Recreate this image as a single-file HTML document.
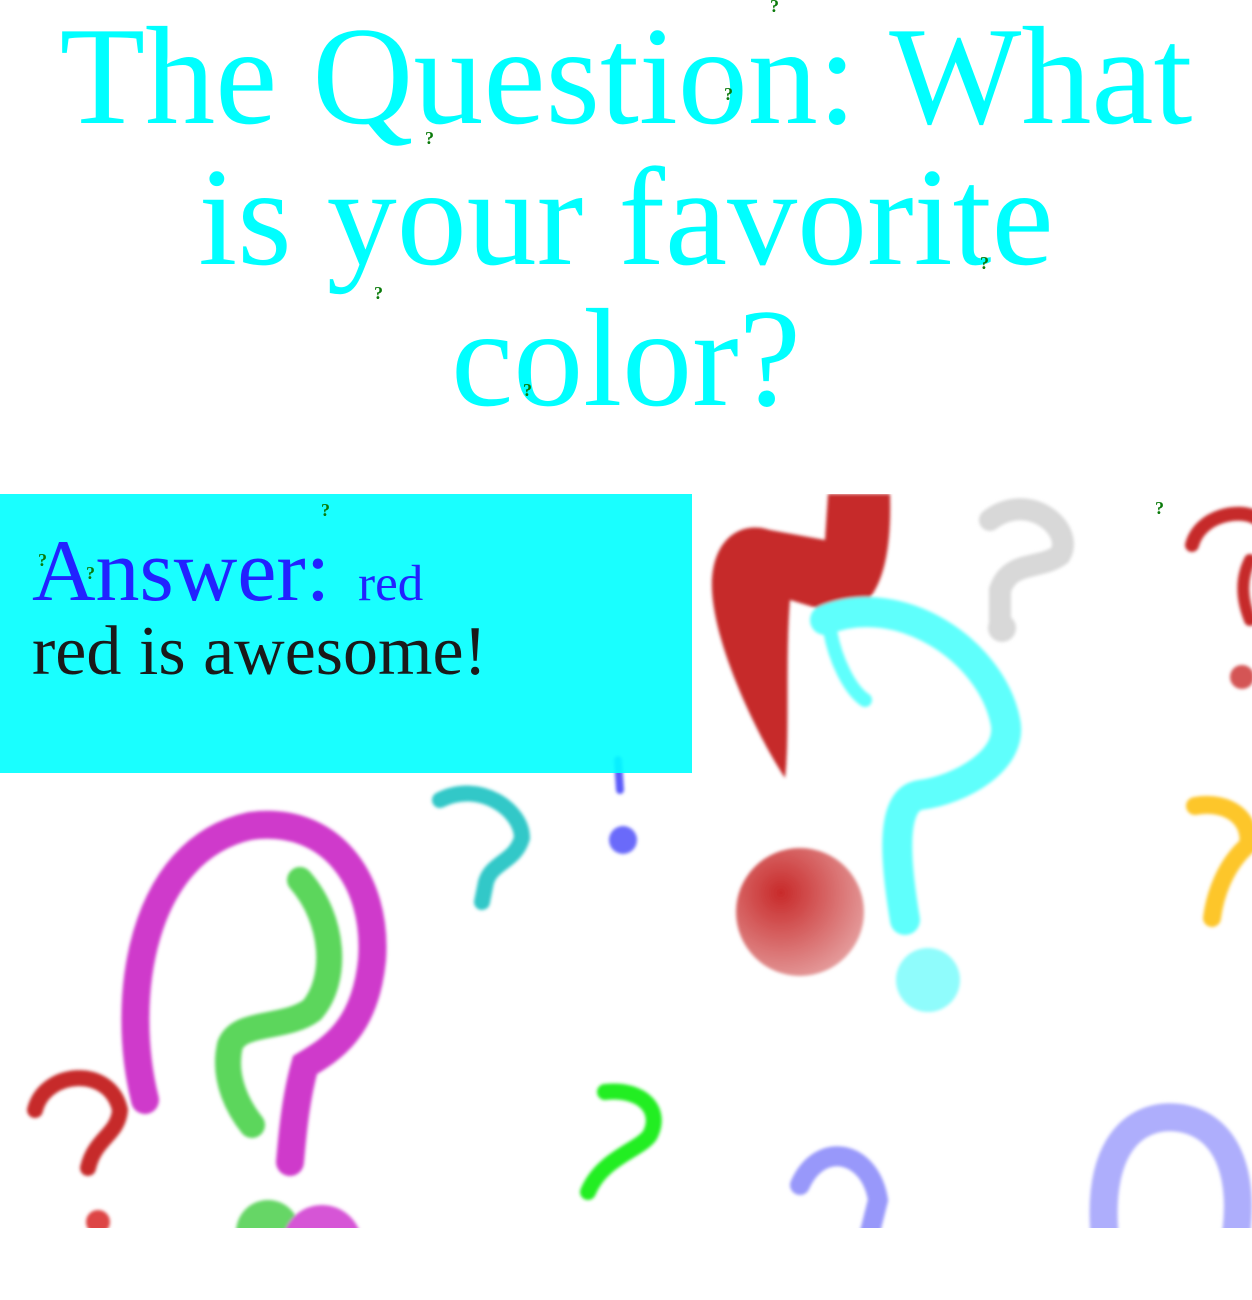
<!DOCTYPE html>
<html><head><meta charset="utf-8"><style>
html,body{margin:0;padding:0;background:#fff;width:1252px;height:1300px;overflow:hidden;position:relative}
h1{position:absolute;left:0;top:6px;width:1252px;margin:0;text-align:center;font:140px/141px "Liberation Serif",serif;color:#00ffff;font-weight:normal;white-space:nowrap}
svg{position:absolute;left:0;top:0}
.box{position:absolute;left:0;top:494px;width:692px;height:279px;background:rgba(0,255,255,0.9)}
.a1{position:absolute;left:32px;top:528px;font:88px/1 "Liberation Serif",serif;color:#2222ff;white-space:nowrap}
.a1 span{font-size:51px;margin-left:6px}
.a2{position:absolute;left:32px;top:617px;font:70px/1 "Liberation Serif",serif;color:#1a1a1a;white-space:nowrap}
.q{position:absolute;font:bold 18px "Liberation Serif",serif;color:#0a7a0a}
</style></head><body>
<svg width="1252" height="1300" viewBox="0 0 1252 1300">
<defs>
<clipPath id="c"><rect x="0" y="494" width="1252" height="734"/></clipPath>
<filter id="b"><feGaussianBlur stdDeviation="1.5"/></filter>
<radialGradient id="rg" cx="0.35" cy="0.35" r="0.7"><stop offset="0" stop-color="#c82a2a"/><stop offset="1" stop-color="#e49a9a"/></radialGradient>
</defs>
<g clip-path="url(#c)" filter="url(#b)" fill="none" stroke-linecap="round">
<path d="M785,778 C760,740 715,650 712,590 C710,540 740,520 770,530 L825,540 L828,494 L890,494 C892,560 880,610 840,615 L790,600 C785,660 790,740 785,778 Z" fill="#c62c2c" stroke="none"/>
<path d="M825,620 C900,590 990,650 1005,720 C1015,760 960,790 920,795 C890,800 895,860 905,920" stroke="#5ffffc" stroke-width="30"/>
<path d="M830,630 C835,660 850,690 865,700" stroke="#5ffffc" stroke-width="14"/>
<circle cx="928" cy="980" r="32" fill="#8ffcfc"/>
<circle cx="800" cy="912" r="64" fill="url(#rg)"/>
<path d="M990,520 C1030,490 1075,530 1060,555 C1040,570 1010,560 1000,590 L1000,620" stroke="#d8d8d8" stroke-width="22"/>
<circle cx="1002" cy="628" r="14" fill="#d8d8d8"/>
<path d="M1192,545 C1200,515 1240,508 1256,518" stroke="#c62c2c" stroke-width="14"/>
<path d="M1250,560 C1240,580 1242,600 1250,620" stroke="#c62c2c" stroke-width="12"/>
<circle cx="1242" cy="677" r="12" fill="#d45555"/>
<path d="M1195,806 C1230,800 1252,820 1248,845 C1225,865 1215,895 1212,918" stroke="#fdc62c" stroke-width="18"/>
<path d="M800,1185 C820,1140 870,1150 878,1200 L868,1240" stroke="#9898fa" stroke-width="20"/>
<path d="M1105,1240 C1095,1140 1140,1112 1180,1118 C1230,1126 1245,1180 1235,1240" stroke="#aeaefc" stroke-width="28"/>
<path d="M300,880 C335,920 338,980 312,1010 C285,1030 240,1020 230,1045 C222,1080 240,1110 252,1125" stroke="#5cd65c" stroke-width="26"/>
<path d="M145,1100 C120,1000 140,850 250,826 C330,815 378,880 372,960 C365,1030 330,1050 305,1065 C295,1100 292,1140 290,1162" stroke="#cc30c8" stroke-width="28" opacity="0.95"/>
<path d="M440,800 C480,780 522,810 522,838 C515,862 492,862 486,882 L482,902" stroke="#33c8c8" stroke-width="16"/>
<path d="M618,760 L620,790" stroke="#5a5afa" stroke-width="8"/>
<circle cx="623" cy="840" r="14" fill="#6a6afa"/>
<path d="M35,1110 C45,1070 110,1065 120,1110 C118,1135 95,1138 88,1168" stroke="#c62c2c" stroke-width="16"/>
<circle cx="98" cy="1222" r="12" fill="#d44"/>
<path d="M605,1092 C645,1088 662,1112 650,1135 C640,1150 602,1158 588,1192" stroke="#22ee22" stroke-width="16"/>
<circle cx="268" cy="1232" r="32" fill="#66d666"/>
<circle cx="322" cy="1245" r="40" fill="#d655d6"/>
</g>
</svg>
<h1>The Question: What<br>is your favorite<br>color?</h1>
<div class="box"></div>
<div class="a1">Answer: <span>red</span></div>
<div class="a2">red is awesome!</div>
<span class="q" style="left:770px;top:-4px">?</span>
<span class="q" style="left:425px;top:128px">?</span>
<span class="q" style="left:724px;top:84px">?</span>
<span class="q" style="left:374px;top:283px">?</span>
<span class="q" style="left:980px;top:253px">?</span>
<span class="q" style="left:523px;top:380px">?</span>
<span class="q" style="left:321px;top:500px">?</span>
<span class="q" style="left:1155px;top:498px">?</span>
<span class="q" style="left:38px;top:550px">?</span>
<span class="q" style="left:86px;top:563px">?</span>
</body></html>
